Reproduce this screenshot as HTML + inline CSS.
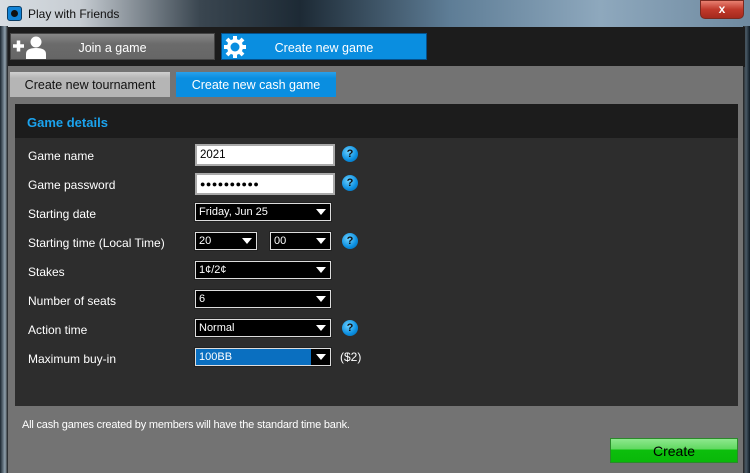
<!DOCTYPE html>
<html><head><meta charset="utf-8"><style>
*{margin:0;padding:0;box-sizing:border-box}
body{width:750px;height:473px;overflow:hidden;position:relative;font-family:"Liberation Sans","DejaVu Sans",sans-serif;background:#1a2a38}
.abs{position:absolute}
#title{left:0;top:0;width:750px;height:28px;background:linear-gradient(90deg,#d8dde2 0,#c6ccd2 80px,#3a4650 200px,#1d2a35 300px,#5e7d96 450px,#8ea8bd 600px,#6f8aa0 750px)}
#frameL{left:0;top:26px;width:8px;height:447px;background:linear-gradient(90deg,#1b2630,#8fa0ad 5px,#1b1b1b)}
#frameR{left:743px;top:26px;width:7px;height:447px;background:linear-gradient(90deg,#222,#4a5a66 3px,#0e1a24)}
#top{left:8px;top:27px;width:737px;height:40px;background:#1c1c1c}
#gray{left:8px;top:66px;width:735px;height:407px;background:#737373}
.btn{height:27px;font-size:12.5px;color:#fff;text-align:center;line-height:28px}
.sel{position:absolute;height:18px;background:#000;border:1px solid #ddd;outline:1px solid #222;color:#fff;font-size:11px;line-height:17px;padding-left:3px}
.sel::after{content:"";position:absolute;right:4px;top:5px;border-left:5px solid transparent;border-right:5px solid transparent;border-top:6px solid #fff}
.lbl{position:absolute;left:28px;font-size:12px;color:#fff}
.q{position:absolute;left:342px;width:16px;height:16px;border-radius:50%;background:radial-gradient(circle at 40% 35%,#6cd0ff,#0a8ee0 60%,#0566a8);color:#111;font-weight:bold;font-size:11px;text-align:center;line-height:16px}
</style></head><body>
<div id="title" class="abs"></div>
<div class="abs" style="left:7px;top:6px;width:15px;height:15px;border-radius:3px;background:#1283d6;border:1px solid #0a3d66"><div style="margin:3px;width:7px;height:7px;border-radius:50%;background:#111"></div></div>
<div class="abs" style="left:28px;top:7px;font-size:12px;color:#111">Play with Friends</div>
<div class="abs" style="left:700px;top:0;width:44px;height:19px;border-radius:0 0 5px 5px;background:linear-gradient(#e88070,#c0392b 50%,#a52a1d);border:1px solid #7a2a20;color:#fff;font-weight:bold;font-size:12px;text-align:center;line-height:16px">x</div>
<div id="frameL" class="abs"></div><div id="frameR" class="abs"></div>
<div id="top" class="abs"></div>
<div id="gray" class="abs"></div>
<div class="abs btn" style="left:10px;top:33px;width:205px;background:linear-gradient(#878787,#6b6b6b 40%,#666);border:1px solid #444">Join a game</div>
<svg class="abs" style="left:11px;top:35px" width="36" height="24" viewBox="0 0 36 24"><path d="M2 11h11M7.5 5.5v11" stroke="#fff" stroke-width="3.5"/><circle cx="25" cy="7" r="5.5" fill="#fff"/><path d="M15 24v-5q0-6 10-6t10 6v5z" fill="#fff"/></svg>
<div class="abs btn" style="left:221px;top:33px;width:206px;background:#0a8ee0;border:1px solid #06508a">Create new game</div>
<svg class="abs" style="left:223px;top:35px" width="24" height="24" viewBox="0 0 24 24"><g fill="#fff"><circle cx="12" cy="12" r="8"/><g stroke="#fff" stroke-width="4"><path d="M12 1v22M1 12h22M4 4l16 16M20 4L4 20"/></g></g><circle cx="12" cy="12" r="4.5" fill="#0a8ee0"/></svg>
<div class="abs" style="left:10px;top:72px;width:160px;height:25px;background:linear-gradient(#cfcfcf,#b5b5b5 25%,#b5b5b5);font-size:12.5px;color:#111;text-align:center;line-height:27px">Create new tournament</div>
<div class="abs" style="left:176px;top:72px;width:160px;height:25px;background:linear-gradient(#2aa0ea,#0a8ee0 25%);font-size:12.5px;color:#fff;text-align:center;line-height:27px">Create new cash game</div>
<div class="abs" style="left:15px;top:104px;width:723px;height:302px;background:#2d2d2d"></div>
<div class="abs" style="left:15px;top:104px;width:723px;height:34px;background:#1c1c1c"></div>
<div class="abs" style="left:27px;top:115px;font-size:13px;font-weight:bold;color:#1ba3ee">Game details</div>
<div class="lbl" style="top:149px">Game name</div>
<div class="lbl" style="top:178px">Game password</div>
<div class="lbl" style="top:207px">Starting date</div>
<div class="lbl" style="top:236px">Starting time (Local Time)</div>
<div class="lbl" style="top:265px">Stakes</div>
<div class="lbl" style="top:294px">Number of seats</div>
<div class="lbl" style="top:323px">Action time</div>
<div class="lbl" style="top:352px">Maximum buy-in</div>
<div class="abs" style="left:195px;top:144px;width:140px;height:22px;background:#fff;border:2px solid #aaa;font-size:11.5px;line-height:19px;padding-left:3px;color:#000">2021</div>
<div class="abs" style="left:195px;top:173px;width:140px;height:22px;background:#fff;border:2px solid #aaa;font-size:9px;line-height:18px;padding-left:3px;color:#000;letter-spacing:0.5px">●●●●●●●●●●</div>
<div class="sel" style="left:195px;top:203px;width:136px">Friday, Jun 25</div>
<div class="sel" style="left:195px;top:232px;width:62px">20</div>
<div class="sel" style="left:270px;top:232px;width:61px">00</div>
<div class="sel" style="left:195px;top:261px;width:136px">1¢/2¢</div>
<div class="sel" style="left:195px;top:290px;width:136px">6</div>
<div class="sel" style="left:195px;top:319px;width:136px">Normal</div>
<div class="sel" style="left:195px;top:348px;width:136px;background:linear-gradient(90deg,#0a6fc0 0,#0a6fc0 115px,#000 115px)">100BB</div>
<div class="abs" style="left:340px;top:350px;font-size:12px;color:#fff">($2)</div>
<div class="q" style="top:146px">?</div>
<div class="q" style="top:175px">?</div>
<div class="q" style="top:233px">?</div>
<div class="q" style="top:320px">?</div>
<div class="abs" style="left:22px;top:419px;font-size:11px;color:#fff;letter-spacing:-0.2px">All cash games created by members will have the standard time bank.</div>
<div class="abs" style="left:610px;top:438px;width:128px;height:25px;background:linear-gradient(#8ee88e,#5fd85f 45%,#0cbf0c 45%,#0ab80a);border:1px solid #2a8a2a;font-size:14px;color:#000;text-align:center;line-height:25px">Create</div>
</body></html>
